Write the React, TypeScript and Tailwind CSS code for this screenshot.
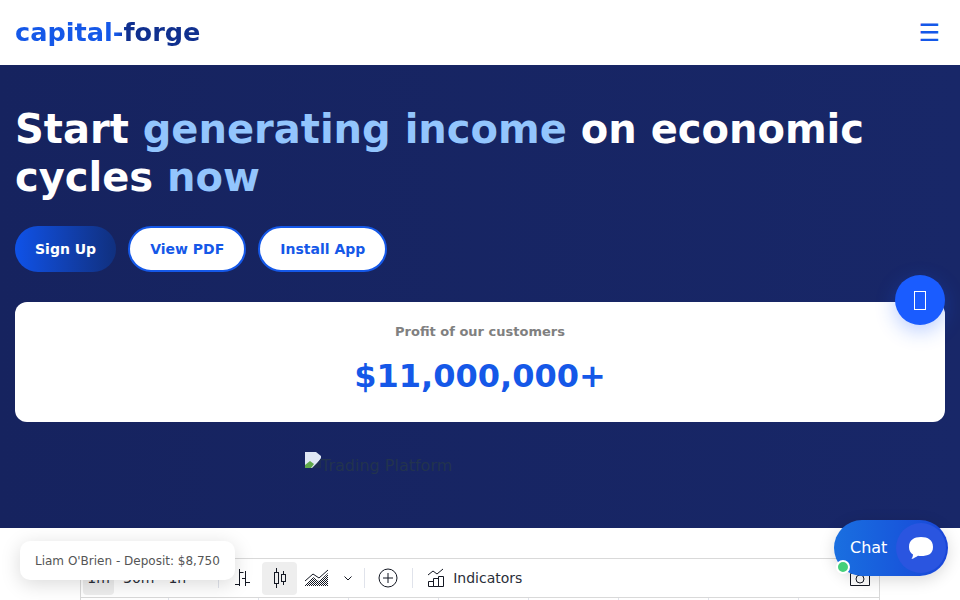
const font = "font-['DejaVu_Sans',sans-serif]";

function ChartToolbar() {
  return (
    <div className="flex h-[39px] items-center border-b border-[#d9d9d9] text-[14px] text-[#2a2e39]">
      <span className="ml-[2px] flex h-[33px] w-[31px] items-center justify-center rounded bg-[#eeeeee]">1m</span>
      <span className="ml-[9px]">30m</span>
      <span className="ml-[14px]">1h</span>
      <div className="ml-[32px] h-[20px] w-px bg-[#e0e3eb]" />
      <svg className="ml-[15px]" width="16" height="20" viewBox="0 0 16 20" fill="none" stroke="#131722">
        <path d="M5.500 1v17M1 16.500h4.500M5.500 4.500h4M11.500 3v15M8 10.500h3.500M11.500 14.500h4.500" />
      </svg>
      <div className="ml-[12px] flex h-[33px] w-[35px] items-center justify-center rounded bg-[#eeeeee]">
        <svg width="14" height="22" viewBox="0 0 14 22" fill="none" stroke="#131722">
          <path d="M3.500 1v20M10.500 4v14" />
          <rect x="1.500" y="5.500" width="4" height="11" fill="#eeeeee" />
          <rect x="8.500" y="7.500" width="4" height="7" fill="#eeeeee" />
        </svg>
      </div>
      <svg className="ml-[8px]" width="24" height="18" viewBox="0 0 24 18" fill="none" stroke="#131722">
        <defs>
          <pattern id="dither" width="2" height="2" patternUnits="userSpaceOnUse">
            <rect width="1" height="1" fill="#131722" stroke="none" />
            <rect x="1" y="1" width="1" height="1" fill="#131722" stroke="none" />
          </pattern>
        </defs>
        <path d="M0 16l8-8 6 4 9-8v13H0z" fill="url(#dither)" stroke="none" />
        <path d="M0 12l8-7 6 4 9-8" />
      </svg>
      <svg className="ml-[15px]" width="8" height="5" viewBox="0 0 8 5" fill="none" stroke="#131722">
        <path d="M.5.500L4 4 7.500.500" />
      </svg>
      <div className="ml-[12px] h-[20px] w-px bg-[#e0e3eb]" />
      <svg className="ml-[13px]" width="20" height="20" viewBox="0 0 20 20" fill="none" stroke="#131722">
        <circle cx="10" cy="10" r="9" />
        <path d="M10 5v10M5 10h10" />
      </svg>
      <div className="ml-[14px] h-[20px] w-px bg-[#e0e3eb]" />
      <svg className="ml-[14px]" width="18" height="20" viewBox="0 0 18 20" fill="none" stroke="#131722">
        <path d="M1 7l5-4 4 3 6-5" />
        <path d="M1.500 18.500v-5h5v5zM6.500 18.500v-8h5v8zM11.500 18.500v-10h5v10z" />
      </svg>
      <span className="ml-[8px]">Indicators</span>
      <svg className="ml-auto mr-[8px]" width="22" height="20" viewBox="0 0 22 20" fill="none" stroke="#131722">
        <path d="M1.500 5.500h5l1.500-3h6l1.500 3h5v12h-19z" />
        <circle cx="11" cy="11" r="4" />
      </svg>
    </div>
  );
}

export default function App() {
  return (
    <div className={`relative h-[600px] w-[960px] overflow-hidden bg-white ${font}`}>
      <header className="flex h-[65px] items-center justify-between bg-white px-[15px]">
        <div className="bg-gradient-to-r from-[#1558e8] from-55% to-[#10308f] to-60% bg-clip-text text-[25.6px] font-bold text-transparent">
          capital-forge
        </div>
        <div className="mr-[5px] text-[24px] leading-none text-[#1558e8]">☰</div>
      </header>

      <section className="h-[463px] bg-gradient-to-r from-[#16235f] to-[#182768] px-[15px] pt-[40px]">
        <h1 className="text-[40px] font-bold leading-[48px] text-white">
          Start <span className="text-[#93c5fd]">generating income</span> on economic cycles <span className="text-[#93c5fd]">now</span>
        </h1>
        <div className="mt-[25px] flex gap-[12px]">
          <button className="h-[46px] rounded-full bg-gradient-to-r from-[#0f52e8] to-[#10307f] px-[20px] text-[14px] font-bold text-white">Sign Up</button>
          <button className="h-[46px] rounded-full border-2 border-[#1558e8] bg-white px-[20px] text-[14px] font-bold text-[#1558e8]">View PDF</button>
          <button className="h-[46px] rounded-full border-2 border-[#1558e8] bg-white px-[20px] text-[14px] font-bold text-[#1558e8]">Install App</button>
        </div>
        <div className="mt-[30px] flex h-[120px] flex-col items-center rounded-[12px] bg-white pt-[20px]">
          <div className="text-[13px] font-bold text-[#808080]">Profit of our customers</div>
          <div className="mt-[10px] text-[32px] font-bold text-[#1558e8]">$11,000,000+</div>
        </div>
        <div className="mt-[30px] flex items-start pl-[290px] text-[16px] text-[#22334f]">
          <svg width="16" height="16" viewBox="0 0 16 16">
            <path d="M0 0h11l5 4v2L9 16H0z" fill="#dfe7f5" />
            <path d="M0 16v-3l5-4 4 3-3 4z" fill="#5fa84a" />
            <path d="M16 7L7 16h9z" fill="#1e2d55" />
          </svg>
          <span className="mt-[2px] leading-[24px]">Trading Platform</span>
        </div>
      </section>

      <div className="mx-[80px] mt-[30px] border-x border-t border-[#d9d9d9]">
        <ChartToolbar />
        <div className="flex h-[3px]">
          <div className="w-[88px] shrink-0 border-r border-[#e0e3eb]" />
          {[0, 1, 2, 3, 4, 5, 6].map((i) => (
            <div key={i} className="w-[90px] shrink-0 border-r border-[#e0e3eb]" />
          ))}
        </div>
      </div>

      <div className="absolute left-[20px] top-[541px] flex h-[39px] w-[215px] items-center rounded-[10px] bg-white pl-[15px] text-[12px] text-[#555555] shadow-[0_4px_20px_rgba(0,0,0,0.15)]">
        Liam O'Brien - Deposit: $8,750
      </div>

      <div className="absolute left-[895px] top-[275px] flex h-[50px] w-[50px] items-center justify-center rounded-full bg-[#1a5cff] text-white shadow-[0_6px_20px_rgba(26,92,255,0.3)]">
        <span className="block h-[19px] w-[12px] border border-white" />
      </div>

      <div className="absolute left-[834px] top-[520px] flex h-[56px] w-[114px] items-center rounded-full bg-gradient-to-r from-[#1a6fe0] to-[#1a45d8] pl-[16px] text-[16px] text-white shadow-[0_4px_16px_rgba(0,0,0,0.15)]">
        Chat
        <span className="absolute right-[2px] top-[3px] flex h-[50px] w-[50px] items-center justify-center rounded-full bg-[#2a55e0]">
          <svg width="26" height="24" viewBox="0 0 26 24" fill="white">
            <path d="M13 1c7 0 12 3 12 10s-5 9-12 9c-1 0-2 0-3-.2C8 21 6 22.500 3.500 23c1-1.500 1.500-3 1.500-4.500C2.500 17 1 14.500 1 11 1 4 6 1 13 1z" />
          </svg>
        </span>
        <span className="absolute left-[2px] top-[40px] h-[14px] w-[14px] rounded-full border-2 border-white bg-[#45d07a]" />
      </div>
    </div>
  );
}
